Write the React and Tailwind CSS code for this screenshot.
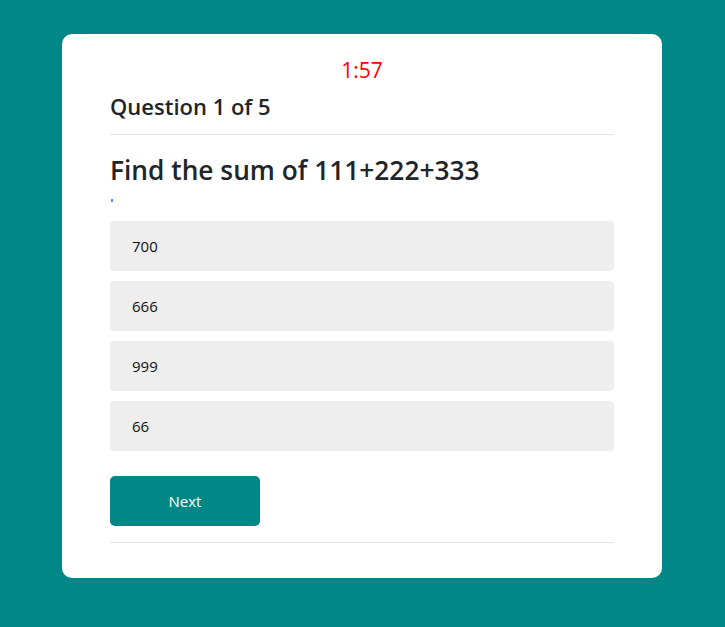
import React from "react";

const options = ["700", "666", "999", "66"];

export default function App() {
  return (
    <div className="min-h-[627px] w-full bg-[#018786] pt-[34px] font-['Open_Sans',sans-serif]">
      <div className="ml-[62px] w-[600px] rounded-[10px] bg-white px-[48px] pt-[22px] pb-[35px]">
        <div className="text-center text-[21px] font-medium leading-[28px] text-[#ff0000]">1:57</div>
        <div className="border-b border-[#e2e2e2] pt-[7px] pb-[13px]">
          <h2 className="text-[22px] font-semibold leading-[30px] text-[#212529]">Question 1 of 5</h2>
        </div>
        <h1 className="pt-[18px] text-[26.3px] font-semibold leading-[34px] text-[#212529]">
          Find the sum of 111+222+333
        </h1>
        <div className="mt-[12px] ml-[1px] h-[3px] w-[2px] bg-[#4a90d9]" />
        <div className="mt-[19px] flex flex-col gap-[10px]">
          {options.map((o) => (
            <div
              key={o}
              className="flex h-[50px] items-center rounded-[4px] bg-[#eeeeee] px-[22px] text-[15px] text-[#111]"
            >
              {o}
            </div>
          ))}
        </div>
        <button className="mt-[25px] flex h-[50px] w-[150px] items-center justify-center rounded-[5px] bg-[#018786] text-[15px] text-white">
          Next
        </button>
        <div className="mt-[16px] border-b border-[#e2e2e2]" />
      </div>
    </div>
  );
}
